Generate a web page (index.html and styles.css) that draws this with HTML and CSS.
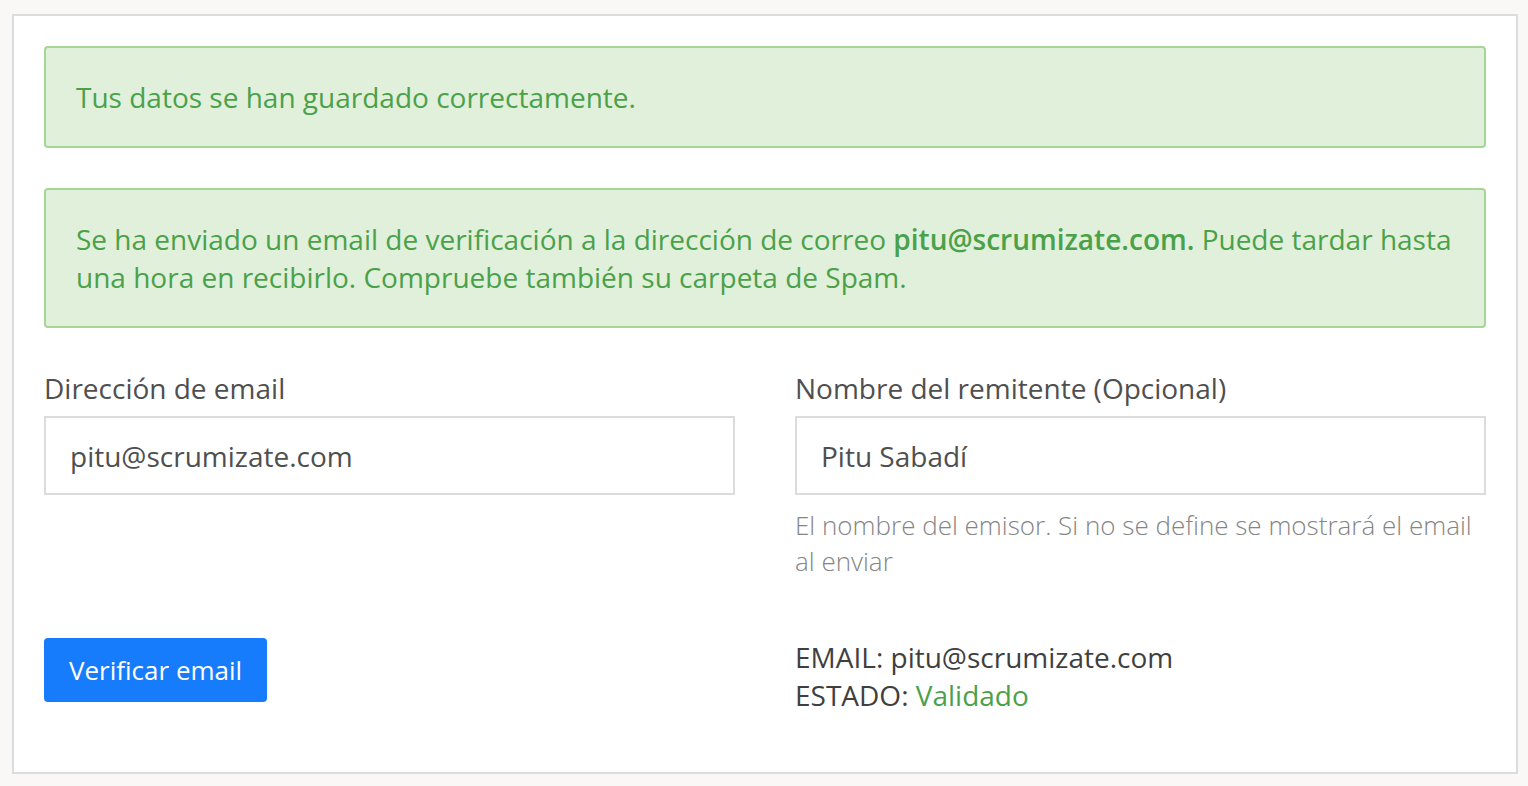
FILE: index.html
```html
<!DOCTYPE html>
<html lang="es">
<head>
    <meta charset="UTF-8">
    <meta name="viewport" content="width=device-width, initial-scale=1.0">
    <title>Email remitente</title>
    <link rel="stylesheet" href="styles.css">
</head>
<body>
    <div class="card">
        <div class="alert">Tus datos se han guardado correctamente.</div>
        <div class="alert">
            Se ha enviado un email de verificación a la dirección de correo <strong>pitu@scrumizate.com.</strong> Puede tardar hasta una hora en recibirlo. Compruebe también su carpeta de Spam.
        </div>

        <form class="sender-form">
            <div class="field">
                <label for="senderEmail">Dirección de email</label>
                <input type="text" id="senderEmail" value="pitu@scrumizate.com">
            </div>
            <div class="field">
                <label for="senderName">Nombre del remitente (Opcional)</label>
                <input type="text" id="senderName" value="Pitu Sabadí">
                <p class="help">El nombre del emisor. Si no se define se mostrará el email al enviar</p>
            </div>
            <div class="field">
                <button type="button">Verificar email</button>
            </div>
            <div class="field status">
                <div>EMAIL: pitu@scrumizate.com</div>
                <div>ESTADO: <span class="ok">Validado</span></div>
            </div>
        </form>
    </div>
</body>
</html>
```

FILE: styles.css
```css
body {
    margin: 0;
    padding: 14px 10px 12px 12px;
    background: #f9f8f6;
    font-family: 'Open Sans', 'Noto Sans', sans-serif;
    font-size: 28px;
    line-height: 38px;
    color: #4a4a4a;
}

.card {
    background: #fff;
    border: 2px solid #dcdcdc;
    padding: 30px 30px 58px 30px;
}

.alert {
    background: #e0f0da;
    border: 2px solid #a6d596;
    border-radius: 4px;
    color: #4ba14a;
    padding: 30px 24px 30px 30px;
    margin-bottom: 40px;
}

.alert strong {
    font-weight: 600;
}

.sender-form {
    display: grid;
    grid-template-columns: 1fr 1fr;
    column-gap: 60px;
    row-gap: 59px;
    margin-top: 41px;
}

.field label {
    display: block;
    margin-bottom: 9px;
    color: #4f4f4f;
}

.field input {
    display: block;
    width: 100%;
    box-sizing: border-box;
    height: 79px;
    padding: 0 24px;
    border: 2px solid #dcdcdc;
    font-family: inherit;
    font-size: 28px;
    color: #4f4f4f;
    outline: none;
}

.help {
    margin: 12px 0 0;
    font-size: 26px;
    font-weight: 300;
    line-height: 36px;
    color: #858585;
}

.field button {
    background: #167cfb;
    color: #fff;
    border: none;
    border-radius: 4px;
    font-family: inherit;
    font-size: 26px;
    height: 64px;
    padding: 0 25px;
    cursor: pointer;
}

.status {
    color: #3f3f3f;
}

.status .ok {
    color: #4ba14a;
}
```
